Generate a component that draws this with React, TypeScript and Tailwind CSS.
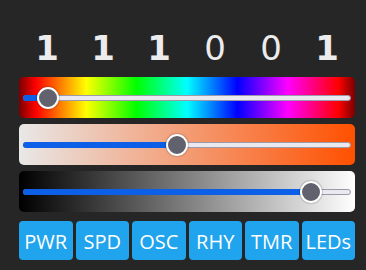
import React from "react";

const BITS = [1, 1, 1, 0, 0, 1];
const BUTTONS = ["PWR", "SPD", "OSC", "RHY", "TMR", "LEDs"];

const SLIDERS = [
  {
    bg: "bg-[linear-gradient(90deg,#7a0000_0%,#ff0000_5%,#ffff00_20%,#00ff00_35%,#00ffff_50%,#0000ff_65%,#ff00ff_80%,#ff0000_95%,#7a0000_100%)]",
    pos: 25,
  },
  { bg: "bg-[linear-gradient(90deg,#e8e8e8_0%,#ff5000_100%)]", pos: 154 },
  { bg: "bg-[linear-gradient(90deg,#000000_0%,#ffffff_100%)]", pos: 288 },
];

function Slider({ bg, pos }: { bg: string; pos: number }) {
  return (
    <div className={`h-[41px] rounded-[5px] flex items-center px-[4px] ${bg}`}>
      <div className="relative w-full h-[6px]">
        <div className="absolute inset-0 rounded-full bg-[#e9e9ef] border border-[#9a9aab]" />
        <div
          className="absolute left-0 top-0 h-full rounded-full bg-[#0c5fe6]"
          style={{ width: pos }}
        />
        <div
          className="absolute top-1/2 w-[22px] h-[22px] -translate-x-1/2 -translate-y-1/2 rounded-full bg-[#62626f] border-[2.5px] border-white shadow-[0_0_2px_rgba(0,0,0,0.5)]"
          style={{ left: pos }}
        />
      </div>
    </div>
  );
}

export default function App() {
  return (
    <div className="w-[366px] h-[270px] bg-[#262626] overflow-hidden">
      <div className="ml-[19px] w-[336px] pt-[31px]">
        <div
          className="grid grid-cols-6 text-[34px] leading-[34px] text-[#ececec] mb-[12px]"
          style={{ fontFamily: '"DejaVu Sans", sans-serif' }}
        >
          {BITS.map((b, i) => (
            <span key={i} className={`text-center ${b ? "font-bold" : "font-normal"}`}>
              {b}
            </span>
          ))}
        </div>

        <div className="flex flex-col gap-[6px]">
          {SLIDERS.map((s, i) => (
            <Slider key={i} bg={s.bg} pos={s.pos} />
          ))}
        </div>

        <div className="flex gap-[3px] mt-[9px]">
          {BUTTONS.map((label) => (
            <button
              key={label}
              className="flex-1 h-[39px] rounded-[4px] bg-[#20a4ed] text-white text-[20px] flex items-center justify-center pt-[2px]"
              style={{ fontFamily: '"Open Sans", sans-serif' }}
            >
              {label}
            </button>
          ))}
        </div>
      </div>
    </div>
  );
}
